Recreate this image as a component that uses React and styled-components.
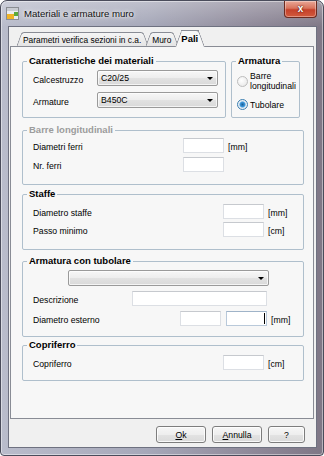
import React from "react"
import styled, { createGlobalStyle } from "styled-components"

const GlobalStyle = createGlobalStyle`
  html, body {
    margin: 0;
    padding: 0;
    background: #fff;
  }
  body {
    font-family: "Liberation Sans", Arial, sans-serif;
    font-size: 8.7px;
    color: #000;
  }
  *, *::before, *::after {
    box-sizing: border-box;
  }
`

const Window = styled.div`
  width: 324px;
  height: 456px;
  display: flex;
  flex-direction: column;
  border: 1px solid #4a4c5b;
  border-radius: 7px 7px 4px 4px;
  background:
    linear-gradient(180deg, rgba(255, 255, 255, 0.28) 0, rgba(255, 255, 255, 0) 26px),
    linear-gradient(90deg, #b9bccb 0%, #a6a8b9 45%, #8d8797 80%, #7f7786 100%);
  box-shadow: inset 0 0 0 1px rgba(255, 255, 255, 0.45);
  overflow: hidden;
`

const TitleBar = styled.div`
  height: 25px;
  flex: none;
  display: flex;
  align-items: center;
  padding-left: 5px;
`

const Title = styled.span`
  margin-left: 5px;
  font-size: 9.6px;
  color: #111;
  text-shadow: 0 0 6px #fff, 0 0 3px rgba(255, 255, 255, 0.9);
`

const CloseButton = styled.div`
  margin-left: auto;
  margin-right: 6px;
  align-self: flex-start;
  width: 33px;
  height: 17px;
  border: 1px solid #6b2a1f;
  border-top: none;
  border-radius: 0 0 4px 4px;
  background: linear-gradient(180deg, #e9a797 0%, #d8735c 45%, #c5412a 55%, #d25a3d 100%);
  box-shadow: inset 0 0 0 1px rgba(255, 255, 255, 0.35);
  display: flex;
  align-items: center;
  justify-content: center;
  color: #fff;
  font-weight: bold;
  font-size: 10px;
  line-height: 1;
  text-shadow: 0 0 2px #5a1a10, 0 0 1px #5a1a10;
`

const Client = styled.div`
  flex: 1;
  margin: 0 6px 7px 7px;
  border: 1px solid #6e7180;
  background: #f0f0f0;
  display: flex;
  flex-direction: column;
`

const TabRow = styled.div`
  display: flex;
  align-items: flex-end;
  height: 17px;
  margin: 3px 0 -1px 7px;
`

const Tab = styled.div`
  position: relative;
  z-index: ${p => (p.$active ? 3 : 1)};
  height: ${p => (p.$active ? 17 : 15)}px;
  padding: ${p => (p.$active ? "0 7px 1px 6px" : "0 8px 0 7px")};
  margin-right: -4px;
  display: flex;
  align-items: center;
  font-weight: ${p => (p.$active ? "bold" : "normal")};
  font-size: ${p => (p.$active ? 9.5 : 8.4)}px;

  &::before,
  &::after {
    content: "";
    position: absolute;
    top: 0;
    bottom: 0;
    width: 60%;
    z-index: -1;
    border-top: 1px solid #898c95;
    background: ${p => (p.$active ? "#f7f7f7" : "linear-gradient(#f5f5f5, #e3e3e3)")};
  }
  &::before {
    left: 0;
    border-left: 1px solid #898c95;
    border-top-left-radius: 3px;
    transform: skewX(-20deg);
    transform-origin: bottom left;
  }
  &::after {
    right: 0;
    border-right: 1px solid #898c95;
    border-top-right-radius: 3px;
    transform: skewX(20deg);
    transform-origin: bottom right;
  }
`

const Panel = styled.div`
  position: relative;
  z-index: 2;
  flex: 1;
  margin: 0 2px 0 1px;
  border: 1px solid #898c95;
  background: #f7f7f7;
  padding: 9px 9px 0 11px;
  display: flex;
  flex-direction: column;
`

const GroupRow = styled.div`
  display: flex;
  align-items: flex-start;
  gap: 5px;
`

const Group = styled.fieldset`
  margin: ${p => p.$mt || 0}px 0 0;
  padding: 0;
  min-width: 0;
  border: 1px solid #afbfcc;
  border-radius: 2px;
  width: ${p => (p.$w ? `${p.$w}px` : "auto")};
  height: ${p => p.$h}px;
`

const Legend = styled.legend`
  margin-left: 4px;
  padding: 0 2px;
  font-weight: bold;
  font-size: 9.5px;
  line-height: 10px;
  color: ${p => (p.$disabled ? "#9c9c9c" : "#000")};
`

const Body = styled.div`
  display: flex;
  flex-direction: column;
  padding: ${p => p.$pt}px 0 0 ${p => p.$pl ?? 10}px;
  gap: ${p => p.$gap}px;
`

const Row = styled.div`
  display: flex;
  align-items: flex-end;
  justify-content: ${p => (p.$center ? "center" : "flex-start")};
`

const Label = styled.span`
  flex: none;
  width: ${p => p.$w}px;
  line-height: 11px;
`

const Field = styled.div`
  flex: none;
  display: flex;
  align-items: center;
  justify-content: flex-end;
  width: ${p => p.$w ?? 41}px;
  height: 15px;
  margin-right: ${p => p.$mr ?? 0}px;
  background: #fff;
  border: 1px solid ${p => (p.$focused ? "#b9c9da" : "#dcdfe4")};
  border-top-color: ${p => (p.$focused ? "#9fb3c8" : "#c6c9ce")};
`

const Caret = styled.span`
  width: 1px;
  height: 11px;
  margin-right: 1px;
  background: #000;
`

const Unit = styled.span`
  margin-left: 4px;
  line-height: 11px;
`

const Combo = styled.div`
  flex: none;
  width: ${p => p.$w}px;
  height: 16px;
  display: flex;
  align-items: center;
  padding: 0 4px 0 3px;
  border: 1px solid #9a9a9a;
  border-radius: 2px;
  background: linear-gradient(#f7f7f7, #ededed 50%, #e2e2e2 50%, #d9d9d9);
  box-shadow: inset 0 0 0 1px rgba(255, 255, 255, 0.7);
`

const ComboText = styled.span`
  flex: 1;
`

const Arrow = styled.span`
  width: 0;
  height: 0;
  border-left: 3px solid transparent;
  border-right: 3px solid transparent;
  border-top: 3px solid #000;
`

const RadioItem = styled.div`
  display: flex;
  align-items: center;
  gap: 2px;
`

const Radio = styled.span`
  flex: none;
  width: 11px;
  height: 11px;
  border-radius: 50%;
  border: 1px solid ${p => (p.$checked ? "#3c7fb1" : "#bdbdbd")};
  background: ${p =>
    p.$checked
      ? "radial-gradient(circle, #1b5e96 0, #3d9be0 2.5px, #e4ebf2 3.5px, #f6f8fa 100%)"
      : "radial-gradient(circle at 40% 40%, #fff, #e4e4e4)"};
`

const RadioText = styled.span`
  line-height: 10px;
`

const ButtonRow = styled.div`
  display: flex;
  justify-content: flex-end;
  gap: 6px;
  margin: 7px 11px 4px 0;
`

const Button = styled.button`
  width: ${p => p.$w}px;
  height: 17px;
  padding: 0;
  border: 1px solid #7d7d7d;
  border-radius: 3px;
  background: linear-gradient(#f6f6f6, #eeeeee 50%, #e3e3e3 50%, #dadada);
  box-shadow: inset 0 0 0 1px rgba(255, 255, 255, 0.8);
  font: inherit;
  color: #000;

  u {
    text-decoration: underline;
  }
`

const AppIcon = () => (
  <svg width="13" height="13" viewBox="0 0 13 13">
    <rect x="0.5" y="0.5" width="12" height="12" fill="#eceef0" stroke="#8a8d92" />
    <rect x="1" y="1" width="11" height="3" fill="#c9ccd2" />
    <rect x="1" y="7" width="7" height="5" fill="#f0b428" />
    <rect x="8" y="5" width="4" height="4" fill="#5caa3c" />
  </svg>
)

const App = () => (
  <>
    <GlobalStyle />
    <Window>
      <TitleBar>
        <AppIcon />
        <Title>Materiali e armature muro</Title>
        <CloseButton>x</CloseButton>
      </TitleBar>
      <Client>
        <TabRow>
          <Tab>Parametri verifica sezioni in c.a.</Tab>
          <Tab>Muro</Tab>
          <Tab $active>Pali</Tab>
        </TabRow>
        <Panel>
          <GroupRow>
            <Group $w={204} $h={62}>
              <Legend>Caratteristiche dei materiali</Legend>
              <Body $pt={4} $gap={6}>
                <Row>
                  <Label $w={64}>Calcestruzzo</Label>
                  <Combo $w={121}>
                    <ComboText>C20/25</ComboText>
                    <Arrow />
                  </Combo>
                </Row>
                <Row>
                  <Label $w={64}>Armature</Label>
                  <Combo $w={121}>
                    <ComboText>B450C</ComboText>
                    <Arrow />
                  </Combo>
                </Row>
              </Body>
            </Group>
            <Group $w={69} $h={62}>
              <Legend>Armatura</Legend>
              <Body $pt={5} $pl={5} $gap={8}>
                <RadioItem>
                  <Radio />
                  <RadioText>
                    Barre
                    <br />
                    longitudinali
                  </RadioText>
                </RadioItem>
                <RadioItem>
                  <Radio $checked />
                  <RadioText>Tubolare</RadioText>
                </RadioItem>
              </Body>
            </Group>
          </GroupRow>

          <Group $mt={7} $h={60}>
            <Legend $disabled>Barre longitudinali</Legend>
            <Body $pt={3} $gap={4}>
              <Row>
                <Label $w={150}>Diametri ferri</Label>
                <Field />
                <Unit>[mm]</Unit>
              </Row>
              <Row>
                <Label $w={150}>Nr. ferri</Label>
                <Field />
              </Row>
            </Body>
          </Group>

          <Group $mt={4} $h={61}>
            <Legend>Staffe</Legend>
            <Body $pt={5} $gap={3}>
              <Row>
                <Label $w={190}>Diametro staffe</Label>
                <Field />
                <Unit>[mm]</Unit>
              </Row>
              <Row>
                <Label $w={190}>Passo minimo</Label>
                <Field />
                <Unit>[cm]</Unit>
              </Row>
            </Body>
          </Group>

          <Group $mt={6} $h={81}>
            <Legend>Armatura con tubolare</Legend>
            <Body $pt={4} $gap={5}>
              <Row $center>
                <Combo $w={201}>
                  <ComboText />
                  <Arrow />
                </Combo>
              </Row>
              <Row>
                <Label $w={99}>Descrizione</Label>
                <Field $w={135} />
              </Row>
              <Row>
                <Label $w={147}>Diametro esterno</Label>
                <Field $mr={5} />
                <Field $focused>
                  <Caret />
                </Field>
                <Unit>[mm]</Unit>
              </Row>
            </Body>
          </Group>

          <Group $mt={3} $h={41}>
            <Legend>Copriferro</Legend>
            <Body $pt={5} $gap={0}>
              <Row>
                <Label $w={190}>Copriferro</Label>
                <Field />
                <Unit>[cm]</Unit>
              </Row>
            </Body>
          </Group>
        </Panel>
        <ButtonRow>
          <Button $w={50}>
            <u>O</u>k
          </Button>
          <Button $w={50}>
            <u>A</u>nnulla
          </Button>
          <Button $w={37}>?</Button>
        </ButtonRow>
      </Client>
    </Window>
  </>
)

export default App
